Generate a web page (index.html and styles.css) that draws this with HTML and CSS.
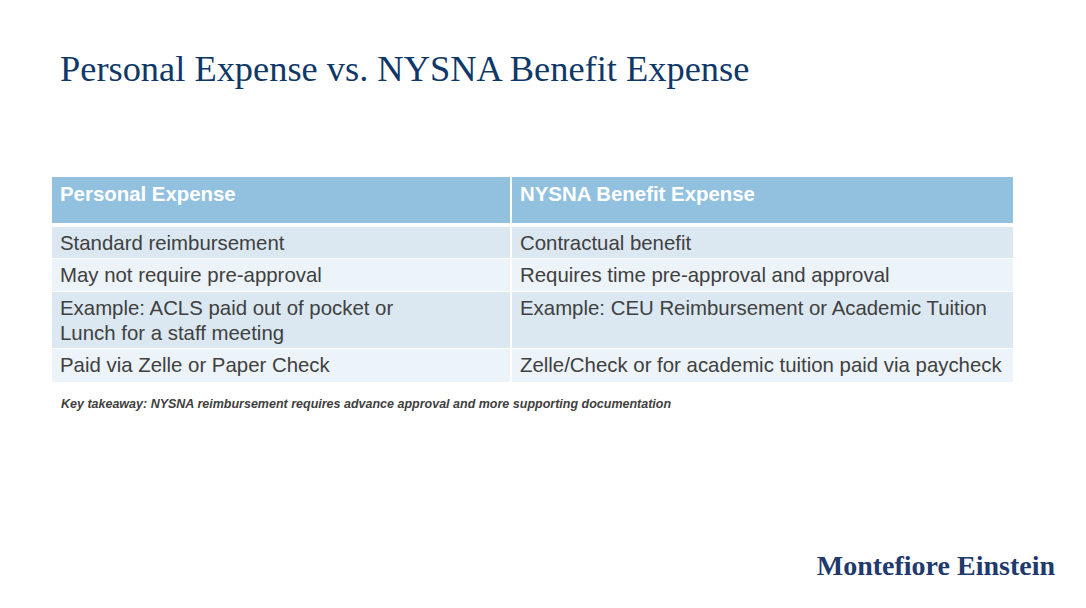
FILE: index.html
```html
<!DOCTYPE html>
<html>
<head>
<meta charset="utf-8">
<link rel="stylesheet" href="styles.css">
</head>
<body>
<div class="slide">
  <h1 class="title">Personal Expense vs. NYSNA Benefit Expense</h1>
  <div class="table">
    <div class="cell head">Personal Expense</div>
    <div class="cell head">NYSNA Benefit Expense</div>
    <div class="cell odd">Standard reimbursement</div>
    <div class="cell odd">Contractual benefit</div>
    <div class="cell even">May not require pre-approval</div>
    <div class="cell even">Requires time pre-approval and approval</div>
    <div class="cell odd">Example: ACLS paid out of pocket or<br>Lunch for a staff meeting</div>
    <div class="cell odd">Example: CEU Reimbursement or Academic Tuition</div>
    <div class="cell even">Paid via Zelle or Paper Check</div>
    <div class="cell even">Zelle/Check or for academic tuition paid via paycheck</div>
  </div>
  <p class="note">Key takeaway: NYSNA reimbursement requires advance approval and more supporting documentation</p>
  <div class="footer">
    <span class="logo">Montefiore Einstein</span>
  </div>
</div>
</body>
</html>
```

FILE: styles.css
```css
html, body {
  margin: 0;
  padding: 0;
  background: #ffffff;
}
.slide {
  width: 1086px;
  height: 608px;
  display: flex;
  flex-direction: column;
  font-family: "Liberation Sans", Arial, sans-serif;
}
.title {
  margin: 0;
  padding: 48px 0 0 60px;
  font-family: "Liberation Serif", "Times New Roman", serif;
  font-weight: normal;
  font-size: 36.4px;
  line-height: 42px;
  color: #0f3868;
  height: 177px;
  box-sizing: border-box;
}
.table {
  margin-left: 52px;
  width: 961px;
  display: grid;
  grid-template-columns: 458px 501px;
  grid-template-rows: 49px 31px 32px 56px 33px;
  column-gap: 2px;
  row-gap: 1px;
}
.cell {
  font-size: 20.4px;
  line-height: 24.7px;
  color: #404040;
  padding: 4px 8px 0 8px;
}
.head {
  background: #92c1e0;
  color: #ffffff;
  font-weight: bold;
  padding-top: 5px;
  margin-bottom: 3px;
}
.odd {
  background: #dbe8f2;
}
.even {
  background: #ecf3f9;
}
.note {
  margin: 15px 0 0 61px;
  font-family: "Liberation Sans Narrow", "Liberation Sans", Arial, sans-serif;
  font-size: 12.5px;
  line-height: 15px;
  font-weight: bold;
  font-style: italic;
  color: #404040;
}
.footer {
  margin-top: auto;
  display: flex;
  justify-content: flex-end;
  padding: 0 31px 27px 0;
}
.logo {
  font-family: "Liberation Serif", "Times New Roman", serif;
  font-weight: bold;
  font-size: 28px;
  color: #1f3a6c;
  line-height: 30px;
}
```
